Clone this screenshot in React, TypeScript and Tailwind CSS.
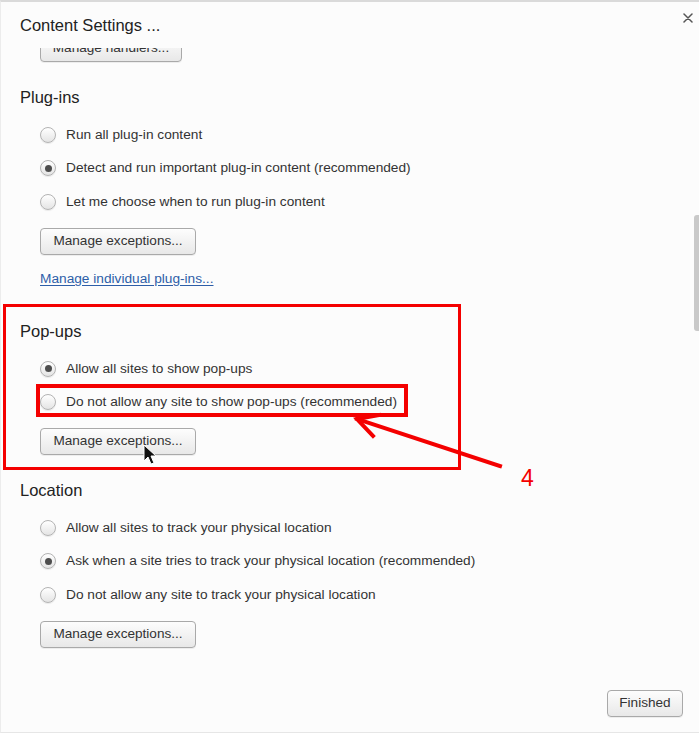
import React from "react";

const font = { fontFamily: '"Liberation Sans", Arial, sans-serif' };

function Radio({ checked }: { checked?: boolean }) {
  return (
    <span className="flex h-[16px] w-[16px] shrink-0 items-center justify-center rounded-full border border-[#b3b3b3] bg-gradient-to-b from-[#ffffff] to-[#e4e4e4] shadow-[0_1px_1px_rgba(0,0,0,0.08)]">
      {checked && <span className="h-[7px] w-[7px] rounded-full bg-[#4d4d4d]" />}
    </span>
  );
}

function Btn({ children, className = "" }: { children: React.ReactNode; className?: string }) {
  return (
    <div
      className={`flex h-[27px] items-center justify-center whitespace-nowrap rounded-[4px] border border-[#a9a9a9] bg-gradient-to-b from-[#fdfdfd] to-[#e8e8e8] text-[13.6px] text-[#333] shadow-[0_1px_0_rgba(0,0,0,0.06)] ${className}`}
    >
      {children}
    </div>
  );
}

function Option({ label, checked }: { label: string; checked?: boolean }) {
  return (
    <div className="flex h-[20px] items-center gap-[10px]">
      <Radio checked={checked} />
      <span className="text-[13.7px] leading-[20px] text-[#333]">{label}</span>
    </div>
  );
}

function Heading({ children, className = "" }: { children: React.ReactNode; className?: string }) {
  return <div className={`text-[16.5px] leading-[20px] text-[#222] ${className}`}>{children}</div>;
}

export default function App() {
  return (
    <div
      style={font}
      className="relative flex h-[733px] w-[699px] flex-col overflow-hidden border-t-2 border-b border-l border-t-[#dadada] border-b-[#e6e6e6] border-l-[#ececec] bg-[#fcfcfc]"
    >
      {/* header */}
      <div className="flex h-[46px] shrink-0 items-start justify-between pl-[19px] pr-[6px]">
        <div className="pt-[13px] text-[16.5px] leading-[20px] text-[#222]">Content Settings ...</div>
        <svg className="mt-[11px]" width="10" height="10" viewBox="0 0 10 10">
          <path d="M1 1 L9 9 M9 1 L1 9" stroke="#555" strokeWidth="1.5" strokeLinecap="round" />
        </svg>
      </div>

      {/* scroll area */}
      <div className="relative flex-1 overflow-hidden">
        <div className="-mt-[13px] pl-[19px]">
          <div className="flex pl-[20px]">
            <Btn className="w-[142px]">Manage handlers...</Btn>
          </div>

          <Heading className="mt-[25px]">Plug-ins</Heading>
          <div className="mt-[17.5px] flex flex-col gap-[13.5px] pl-[20px]">
            <Option label="Run all plug-in content" />
            <Option label="Detect and run important plug-in content (recommended)" checked />
            <Option label="Let me choose when to run plug-in content" />
          </div>
          <div className="mt-[16.5px] flex pl-[20px]">
            <Btn className="w-[156px]">Manage exceptions...</Btn>
          </div>
          <div className="mt-[14px] pl-[20px] text-[13.7px] leading-[20px] text-[#2d5ea8] underline underline-offset-2">
            Manage individual plug-ins...
          </div>

          <Heading className="mt-[32px]">Pop-ups</Heading>
          <div className="mt-[17.5px] flex flex-col gap-[13.5px] pl-[20px]">
            <Option label="Allow all sites to show pop-ups" checked />
            <Option label="Do not allow any site to show pop-ups (recommended)" />
          </div>
          <div className="mt-[16px] flex pl-[20px]">
            <Btn className="w-[156px]">Manage exceptions...</Btn>
          </div>

          <Heading className="mt-[25px]">Location</Heading>
          <div className="mt-[17.5px] flex flex-col gap-[13.5px] pl-[20px]">
            <Option label="Allow all sites to track your physical location" />
            <Option label="Ask when a site tries to track your physical location (recommended)" checked />
            <Option label="Do not allow any site to track your physical location" />
          </div>
          <div className="mt-[16.5px] flex pl-[20px]">
            <Btn className="w-[156px]">Manage exceptions...</Btn>
          </div>
        </div>
      </div>

      {/* footer */}
      <div className="flex shrink-0 justify-end pb-[15px] pr-[16px] pt-[12px]">
        <Btn className="w-[76px]">Finished</Btn>
      </div>

      {/* scrollbar */}
      <div className="absolute left-[693px] top-[213px] h-[116px] w-[6px] rounded-l-[3px] bg-[#c9c9c9]" />

      {/* annotations */}
      <div className="pointer-events-none absolute left-[2px] top-[302px] h-[166px] w-[458px] border-[3px] border-[#f40000]" />
      <div className="pointer-events-none absolute left-[35px] top-[382px] h-[33px] w-[372px] border-[4px] border-[#f40000]" />
      <svg className="pointer-events-none absolute left-0 top-0" width="699" height="733">
        <path d="M499 464 L356 417" stroke="#f40000" strokeWidth="4" strokeLinecap="square" />
        <path d="M378 413 L356 417 L372 434" stroke="#f40000" strokeWidth="4" fill="none" strokeLinecap="square" />
        <path
          d="M143 443 L143 459 L147 455 L150 462 L153 461 L150 454 L155 454 Z"
          fill="#111"
          stroke="#fff"
          strokeWidth="1"
        />
      </svg>
      <div className="pointer-events-none absolute left-[520px] top-[463px] text-[23px] leading-[26px] text-[#f40000]">4</div>
    </div>
  );
}
